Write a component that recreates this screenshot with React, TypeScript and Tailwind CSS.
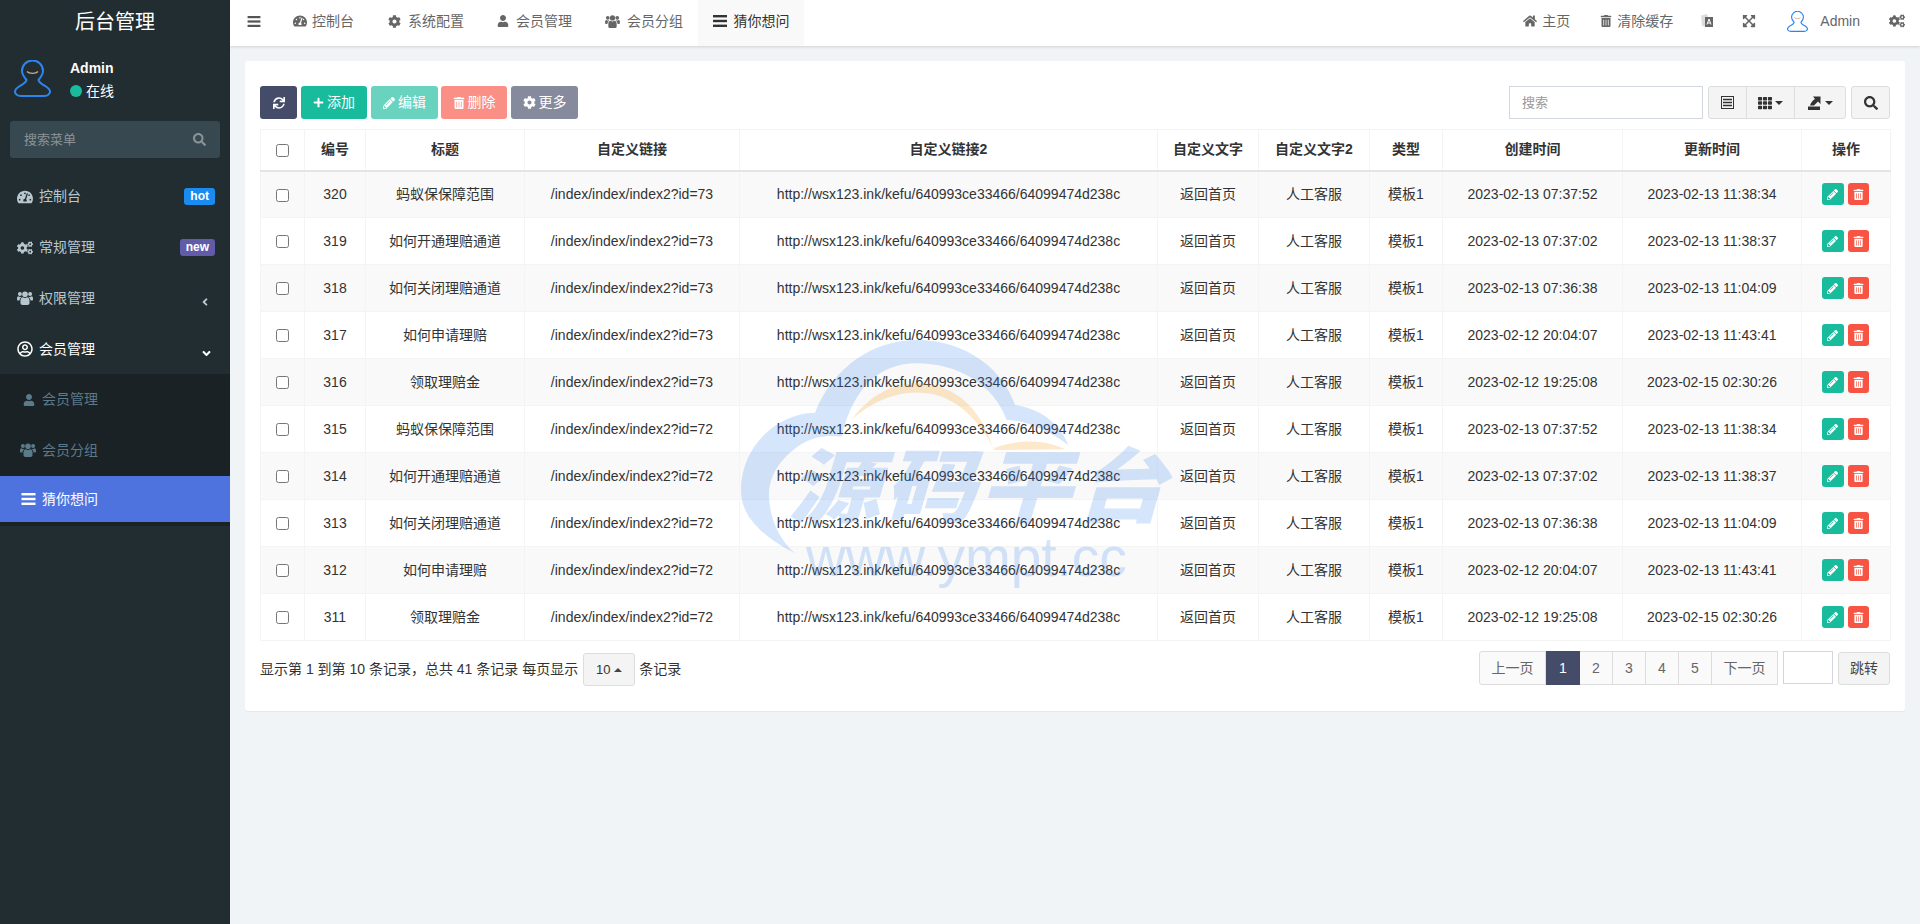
import {
  FaAngleDown,
  FaAngleLeft,
  FaCog,
  FaCogs,
  FaExpandArrowsAlt,
  FaHome,
  FaPencilAlt,
  FaPlus,
  FaRegUserCircle,
  FaSearch,
  FaSync,
  FaTachometerAlt,
  FaTh,
  FaTrashAlt,
  FaUser,
} from "react-icons/fa";

const titles = ["蚂蚁保保障范围", "如何开通理赔通道", "如何关闭理赔通道", "如何申请理赔", "领取理赔金"];
const created = ["2023-02-13 07:37:52", "2023-02-13 07:37:02", "2023-02-13 07:36:38", "2023-02-12 20:04:07", "2023-02-12 19:25:08"];
const updated = ["2023-02-13 11:38:34", "2023-02-13 11:38:37", "2023-02-13 11:04:09", "2023-02-13 11:43:41", "2023-02-15 02:30:26"];

const rows = Array.from({ length: 10 }, (_, i) => ({
  id: 320 - i,
  title: titles[i % 5],
  link: `/index/index/index2?id=${i < 5 ? 73 : 72}`,
  created: created[i % 5],
  updated: updated[i % 5],
}));

const columns = [
  { label: "编号", width: "w-[61px]" },
  { label: "标题", width: "w-[159px]" },
  { label: "自定义链接", width: "w-[215px]" },
  { label: "自定义链接2", width: "w-[418px]" },
  { label: "自定义文字", width: "w-[101px]" },
  { label: "自定义文字2", width: "w-[111px]" },
  { label: "类型", width: "w-[73px]" },
  { label: "创建时间", width: "w-[180px]" },
  { label: "更新时间", width: "w-[179px]" },
  { label: "操作", width: "w-[89px]" },
];

const Avatar = ({ className }: { className: string }) => (
  <svg viewBox="0 0 37 37" className={className} fill="none">
    <path
      d="M12.5 20C10 17 8 14 8 11A10.5 10.5 0 0 1 29 11C29 14 27 17 24.5 20C25 23 28 24 32 26.5C36 29 37 32 35 34C34 35.5 32 36 30 36H7C5 36 3 35.5 2 34C0 32 1 29 5 26.5C9 24 12 23 12.5 20Z"
      stroke="#2b85f0"
      strokeWidth="2"
    />
    <path d="M13 11.5C15 14 22 14 24 11.5" stroke="#c9a78c" strokeWidth="1.4" />
  </svg>
);

const UsersIcon = ({ className }: { className: string }) => (
  <svg viewBox="0 0 16 14" className={className} fill="currentColor">
    <circle cx="8" cy="3.2" r="2.8" />
    <circle cx="2.9" cy="3" r="2" />
    <circle cx="13.1" cy="3" r="2" />
    <path d="M3.5 12.3V9.5C3.500 7.500 4.800 6.300 6 6.300C7 7.300 9 7.300 10 6.300C11.200 6.300 12.500 7.500 12.500 9.500V12.300C12.500 13.400 11.600 14 10.500 14H5.500C4.400 14 3.500 13.400 3.500 12.300Z" />
    <path d="M0 7.500C0 6 .7 5.300 1.500 5.300C2.300 6 3.300 6.100 4.200 5.700C4.400 5.900 4.500 6 4.600 6.100C3.300 6.900 2.600 8 2.500 9.600H1C.4 9.600 0 9.200 0 8.600Z" />
    <path d="M16 7.500C16 6 15.300 5.300 14.500 5.300C13.700 6 12.700 6.100 11.800 5.700C11.600 5.900 11.500 6 11.400 6.100C12.700 6.900 13.400 8 13.500 9.600H15C15.600 9.600 16 9.200 16 8.600Z" />
  </svg>
);

const BarsIcon = ({ className }: { className: string }) => (
  <svg viewBox="0 0 14 12" className={className} fill="currentColor">
    <rect y="0" width="14" height="2.4" />
    <rect y="4.8" width="14" height="2.4" />
    <rect y="9.600" width="14" height="2.4" />
  </svg>
);

const Caret = ({ up }: { up?: boolean }) => (
  <span
    className={
      up
        ? "inline-block border-x-[4px] border-b-[4px] border-x-transparent border-b-[#444]"
        : "inline-block border-x-[4px] border-t-[4px] border-x-transparent border-t-[#333]"
    }
  />
);

const SideItem = ({ icon, label, active, right, className }: { icon: React.ReactNode; label: string; active?: boolean; right?: React.ReactNode; className?: string }) => (
  <div className={`flex items-center pl-[17px] pr-[15px] text-[14px] ${className} ${active ? "text-white" : "text-[#b8c7ce]"}`}>
    <span className="flex w-[16px] justify-center text-[16px]">{icon}</span>
    <span className="ml-[6px]">{label}</span>
    <span className="ml-auto flex items-center">{right}</span>
  </div>
);

const Sidebar = () => (
  <aside className="flex w-[230px] shrink-0 flex-col bg-[#222d32]">
    <div className="flex h-[44px] items-center justify-center text-[20px] text-white">后台管理</div>
    <div className="flex h-[66px] items-center pl-[14px] pt-[2px]">
      <Avatar className="h-[37px] w-[37px]" />
      <div className="ml-[19px] pt-[2px] text-[14px] text-white">
        <div className="font-bold leading-[20px]">Admin</div>
        <div className="mt-[3px] flex items-center leading-[20px]">
          <span className="mr-[4px] h-[12px] w-[12px] rounded-full bg-[#18bc9c]" />
          在线
        </div>
      </div>
    </div>
    <div className="mx-[10px] mt-[11px] flex h-[37px] items-center justify-between rounded-[3px] bg-[#374850] pl-[14px] pr-[14px] text-[13px] text-[#8b9398]">
      <span>搜索菜单</span>
      <FaSearch className="text-[13px]" />
    </div>
    <div className="mt-[13px]">
      <SideItem
        className="h-[51px]"
        icon={<FaTachometerAlt />}
        label="控制台"
        right={<span className="rounded-[3px] bg-[#1a8cf0] px-[6px] text-[12px] font-bold leading-[17px] text-white">hot</span>}
      />
      <SideItem
        className="h-[51px]"
        icon={<FaCogs />}
        label="常规管理"
        right={<span className="rounded-[3px] bg-[#605ca8] px-[6px] text-[12px] font-bold leading-[17px] text-white">new</span>}
      />
      <SideItem className="h-[50px]" icon={<UsersIcon className="h-[14px] w-[16px]" />} label="权限管理" right={<FaAngleLeft className="mr-[4px] mt-[8px] text-[12px]" />} />
      <SideItem className="h-[51px] pt-[1px]" icon={<FaRegUserCircle className="text-white" />} label="会员管理" active right={<FaAngleDown className="mr-[2px] mt-[8px] text-[13px] text-white" />} />
    </div>
    <div className="bg-[#1a2226] text-[14px]">
      <div className="flex h-[51px] items-center pl-[23px] text-[#5b7a8a]">
        <FaUser className="w-[12px] text-[12px]" />
        <span className="ml-[7px]">会员管理</span>
      </div>
      <div className="flex h-[51px] items-center pb-[1px] pl-[20px] text-[#5b7a8a]">
        <UsersIcon className="h-[14px] w-[16px]" />
        <span className="ml-[6px]">会员分组</span>
      </div>
      <div className="flex h-[46px] items-center bg-[#4e73df] pl-[21px] text-white">
        <BarsIcon className="h-[12px] w-[15px]" />
        <span className="ml-[6px]">猜你想问</span>
      </div>
    </div>
    <div className="h-[4px] bg-[#1a2226]" />
  </aside>
);

const tabs = [
  { icon: <FaTachometerAlt className="text-[14px]" />, label: "控制台", width: "w-[95px]", slot: "w-[19px]" },
  { icon: <FaCog className="text-[13px]" />, label: "系统配置", width: "w-[109px]", slot: "w-[20px]" },
  { icon: <FaUser className="text-[12px]" />, label: "会员管理", width: "w-[108px]", slot: "w-[19px]" },
  { icon: <UsersIcon className="h-[13px] w-[15px]" />, label: "会员分组", width: "w-[108px]", slot: "w-[22px]" },
];

const TopBar = () => (
  <header className="flex h-[46px] shrink-0 items-stretch bg-white text-[14px] text-[#666] shadow-[0_1px_3px_rgba(0,0,0,0.14)]">
    <div className="flex w-[48px] items-center justify-center pb-[4px] text-[#555]">
      <BarsIcon className="h-[11px] w-[14px]" />
    </div>
    {tabs.map((t) => (
      <div key={t.label} className={`flex items-center pb-[4px] pl-[15px] ${t.width}`}>
        <span className={`text-[#666] ${t.slot}`}>{t.icon}</span>
        <span>{t.label}</span>
      </div>
    ))}
    <div className="flex w-[106px] items-center justify-center gap-[7px] bg-[#f9f9f9] pb-[4px] text-[#333]">
      <BarsIcon className="h-[12px] w-[14px]" />
      <span>猜你想问</span>
    </div>
    <div className="ml-auto flex items-center pb-[4px] pr-[15px]">
      <FaHome className="text-[14px]" />
      <span className="ml-[5px]">主页</span>
      <FaTrashAlt className="ml-[30px] text-[12px]" />
      <span className="ml-[5px]">清除缓存</span>
      <svg viewBox="0 0 14 14" className="ml-[27px] h-[14px] w-[14px]">
        <path d="M1 1.500 7 0l1 2.500V13L2 12z" fill="#ddd" />
        <path d="M5 3h8v10H5z" fill="#666" />
        <path d="M7 10.500 9 5l2 5.500M7.800 9h2.400" stroke="#fff" strokeWidth="1" fill="none" />
      </svg>
      <FaExpandArrowsAlt className="ml-[28px] text-[14px]" />
      <Avatar className="ml-[31px] h-[21px] w-[21px]" />
      <span className="ml-[12px]">Admin</span>
      <FaCogs className="ml-[29px] text-[16px]" />
    </div>
  </header>
);

const Toolbar = () => (
  <div className="flex h-[33px] items-stretch text-[14px]">
    <div className="flex w-[37px] items-center justify-center rounded-[3px] bg-[#444c69] text-white">
      <FaSync className="text-[12px]" />
    </div>
    <div className="ml-[4px] flex w-[66px] items-center justify-center gap-[3px] rounded-[3px] bg-[#18bc9c] text-white">
      <FaPlus className="text-[11px]" />
      添加
    </div>
    <div className="ml-[4px] flex w-[67px] items-center justify-center gap-[3px] rounded-[3px] bg-[#18bc9c]/65 text-white">
      <FaPencilAlt className="text-[12px]" />
      编辑
    </div>
    <div className="ml-[3px] flex w-[66px] items-center justify-center gap-[3px] rounded-[3px] bg-[#f75444]/65 text-white">
      <FaTrashAlt className="text-[12px]" />
      删除
    </div>
    <div className="ml-[4px] flex w-[67px] items-center justify-center gap-[3px] rounded-[3px] bg-[#444c69]/65 text-white">
      <FaCog className="text-[13px]" />
      更多
    </div>
    <div className="ml-auto flex w-[194px] items-center border border-[#d2d6de] pl-[12px] text-[13px] text-[#999]">搜索</div>
    <div className="ml-[5px] flex rounded-[3px] border border-[#ddd] bg-[#f4f4f4] text-[#333]">
      <div className="flex w-[38px] items-center justify-center border-r border-[#ddd]">
        <svg viewBox="0 0 13 13" className="h-[13px] w-[13px]" fill="none" stroke="#333">
          <rect x=".5" y=".5" width="12" height="12" strokeWidth="1" />
          <path d="M2 3.500h9M2 6.500h9M2 9.500h9" strokeWidth="1.300" />
        </svg>
      </div>
      <div className="flex w-[48px] items-center justify-center gap-[3px] border-r border-[#ddd]">
        <FaTh className="text-[14px]" />
        <Caret />
      </div>
      <div className="flex w-[50px] items-center justify-center gap-[4px]">
        <svg viewBox="0 0 14 14" className="h-[14px] w-[14px]" fill="#333">
          <path d="M1 10.500h12V14H1zM6 .5h7.500V8L11 5.500 7 9.500H3C3.500 7 5.500 4.500 8 3z" />
        </svg>
        <Caret />
      </div>
    </div>
    <div className="ml-[5px] flex w-[39px] items-center justify-center rounded-[3px] border border-[#ddd] bg-[#f4f4f4] text-[#333]">
      <FaSearch className="text-[14px]" />
    </div>
  </div>
);

const DataTable = () => (
  <table className="mt-[10px] w-[1630px] table-fixed border-collapse text-center text-[14px] text-[#333]">
    <colgroup>
      <col className="w-[44px]" />
      {columns.map((c) => (
        <col key={c.label} className={c.width} />
      ))}
    </colgroup>
    <thead>
      <tr className="h-[41px]">
        <th className="border border-b-2 border-[#f4f4f4] border-b-[#e4e4e4] font-normal">
          <input type="checkbox" className="align-middle" readOnly />
        </th>
        {columns.map((c) => (
          <th key={c.label} className="border border-b-2 border-[#f4f4f4] border-b-[#e4e4e4] font-bold">
            {c.label}
          </th>
        ))}
      </tr>
    </thead>
    <tbody>
      {rows.map((r, i) => (
        <tr key={r.id} className={`h-[47px] ${i % 2 === 0 ? "bg-[#f9f9f9]" : "bg-white"}`}>
          <td className="border border-[#f4f4f4]">
            <input type="checkbox" className="align-middle" readOnly />
          </td>
          <td className="border border-[#f4f4f4]">{r.id}</td>
          <td className="border border-[#f4f4f4]">{r.title}</td>
          <td className="border border-[#f4f4f4]">{r.link}</td>
          <td className="border border-[#f4f4f4]">http://wsx123.ink/kefu/640993ce33466/64099474d238c</td>
          <td className="border border-[#f4f4f4]">返回首页</td>
          <td className="border border-[#f4f4f4]">人工客服</td>
          <td className="border border-[#f4f4f4]">模板1</td>
          <td className="border border-[#f4f4f4]">{r.created}</td>
          <td className="border border-[#f4f4f4]">{r.updated}</td>
          <td className="border border-[#f4f4f4]">
            <div className="flex justify-center gap-[4px] pr-[2px]">
              <span className="flex h-[22px] w-[22px] items-center justify-center rounded-[3px] bg-[#18bc9c] text-white">
                <FaPencilAlt className="text-[11px]" />
              </span>
              <span className="flex h-[22px] w-[21px] items-center justify-center rounded-[3px] bg-[#f75444] text-white">
                <FaTrashAlt className="text-[11px]" />
              </span>
            </div>
          </td>
        </tr>
      ))}
    </tbody>
  </table>
);

const Footer = () => (
  <div className="mt-[10px] flex items-start justify-between text-[14px] text-[#333]">
    <div className="mt-[2px] flex items-center">
      <span>显示第 1 到第 10 条记录，总共 41 条记录 每页显示</span>
      <span className="ml-[5px] mr-[4px] flex h-[33px] w-[52px] items-center justify-center gap-[4px] rounded-[3px] border border-[#ddd] bg-[#f4f4f4] text-[13px]">
        10
        <Caret up />
      </span>
      <span>条记录</span>
    </div>
    <div className="flex items-start">
      <div className="flex h-[34px] text-[#666]">
        <span className="flex w-[67px] items-center justify-center rounded-l-[3px] border border-[#ddd] bg-[#fafafa]">上一页</span>
        <span className="flex w-[34px] items-center justify-center bg-[#444c69] text-white">1</span>
        {["2", "3", "4", "5"].map((p) => (
          <span key={p} className="flex w-[33px] items-center justify-center border border-l-0 border-[#ddd] bg-[#fafafa]">
            {p}
          </span>
        ))}
        <span className="flex w-[66px] items-center justify-center border border-l-0 border-[#ddd] bg-[#fafafa]">下一页</span>
      </div>
      <div className="ml-[5px] h-[33px] w-[50px] border border-[#d2d6de]" />
      <div className="ml-[5px] mt-[1px] flex h-[33px] w-[52px] items-center justify-center rounded-[3px] border border-[#ddd] bg-[#f4f4f4] text-[#444]">跳转</div>
    </div>
  </div>
);

// the site's stamp sits over the table
const Watermark = () => (
  <div className="pointer-events-none absolute left-[700px] top-[320px] h-[270px] w-[520px]">
    <svg viewBox="0 0 1560 810" className="absolute inset-0 h-full w-full">
      <path
        d="M285 700C170 640 123 580 123 510C123 380 230 280 345 278C400 140 520 60 650 60C800 60 910 150 945 255C1020 265 1080 310 1105 375C1030 320 960 300 920 300C880 190 770 130 650 130C540 130 460 200 425 350C380 345 340 350 300 375C240 415 205 470 207 530C209 600 240 660 285 700Z"
        fill="#2d7bf0"
        fillOpacity="0.2"
      />
      <path
        d="M455 300C510 220 590 190 650 190C760 190 840 260 880 385C960 355 1040 360 1095 388L885 390C830 290 760 220 660 218C580 215 510 250 455 300Z"
        fill="#f9a52c"
        fillOpacity="0.25"
      />
    </svg>
    <div className="absolute left-[88px] top-[129px] origin-left scale-x-[1.15] whitespace-nowrap text-[80px] font-black italic leading-[80px] tracking-[3px] text-[#2d7bf0]/20">
      源码平台
    </div>
    <div className="absolute left-[106px] top-[207px] whitespace-nowrap text-[55px] leading-[60px] text-[#2d7bf0]/20">www.ympt.cc</div>
  </div>
);

const App = () => (
  <div className="relative flex h-[924px] overflow-hidden bg-[#f1f4f6] font-['Liberation_Sans','Noto_Sans_CJK_SC',sans-serif]">
    <Sidebar />
    <main className="flex min-w-0 flex-1 flex-col">
      <TopBar />
      <div className="px-[15px] pt-[15px]">
        <section className="h-[650px] rounded-[3px] bg-white px-[15px] pt-[25px] shadow-[0_1px_1px_rgba(0,0,0,0.05)]">
          <Toolbar />
          <DataTable />
          <Footer />
        </section>
      </div>
    </main>
    <Watermark />
  </div>
);

export default App;
